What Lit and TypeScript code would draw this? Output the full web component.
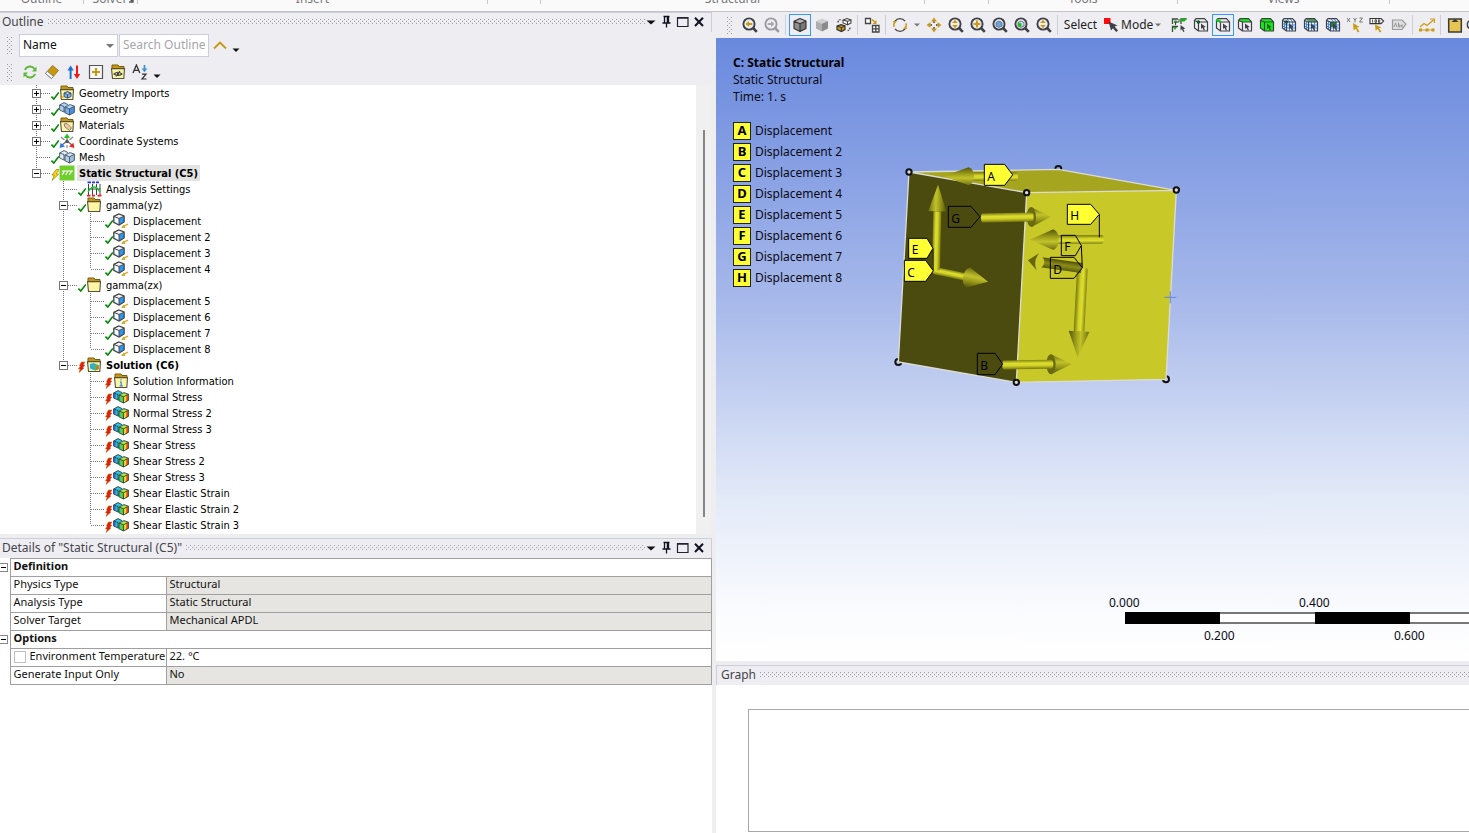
import { LitElement, html, svg, css, nothing } from "lit";
import { customElement, property } from "lit/decorators.js";
import { classMap } from "lit/directives/class-map.js";

const INK = "#3f3f46";
const GOLD = "#cc9a10";

/* ---------- icon fragments, all on a 16 x 16 grid ---------- */

const lens = (inner: unknown, color = INK) => svg`
  <circle cx="7" cy="7" r="5.6" fill="none" stroke=${color} stroke-width="1.9"/>
  <path d="M11 11 L14.8 14.8" stroke=${color} stroke-width="2.6"/>${inner}`;

const pointer = (x: number, y: number, color = INK) => svg`
  <path transform="translate(${x} ${y})" fill=${color}
    d="M0 0 L0 5.4 L1.4 4.3 L2.8 7 L4 6.4 L2.8 3.9 L4.8 3.6 Z"/>`;

const wireCube = (fill: unknown, over: unknown = nothing) => svg`
  ${fill}
  <path d="M1.5 3.5 L3 1.7 H11.5 L14.5 4.8 V14 H5.5 L1.5 11 Z M1.5 3.5 L5.5 5 H14.5 M5.5 5 V14"
    fill="none" stroke=${INK} stroke-width="1.2" stroke-linejoin="round"/>${over}`;

const meshCube = (fill: unknown) => svg`
  <path d="M1.5 3.5 L3 1.7 H11.5 L14.5 4.8 V14 H5.5 L1.5 11 Z" fill="#e8f1ff"/>
  <path d="M8.5 5 V14 M11.5 5 V14 M5.5 8 H14.5 M5.5 11 H14.5 M3.5 4.4 V12.5 M1.5 6.5 L5.5 8 M1.5 9 L5.5 11 M6 1.7 L8.5 5 M9 1.7 L11.5 5"
    fill="none" stroke="#3f8fe8" stroke-width="1"/>
  ${wireCube(fill)}${pointer(8, 6.5)}`;

const solidCube = (top: string, left: string, right: string, stroke: string) => svg`
  <path d="M8 1.5 L14 4 L8 6.8 L2 4.2 Z" fill=${top}/>
  <path d="M2 4.2 L8 6.8 V14.6 L2 11.6 Z" fill=${left}/>
  <path d="M14 4 L8 6.8 V14.6 L14 11.4 Z" fill=${right}/>
  <path d="M8 1.5 L14 4 V11.4 L8 14.6 L2 11.6 V4.2 Z M2 4.2 L8 6.8 L14 4 M8 6.8 V14.6"
    fill="none" stroke=${stroke} stroke-width="1.1" stroke-linejoin="round"/>`;

const folder = (inner: unknown = nothing) => svg`
  <path d="M2 1 H8 L9 2.5 H14 V6 H2 Z" fill="#c9970e" stroke="#7a5c10" stroke-width="1"/>
  <path d="M1.5 4.6 H14.5 L13.8 14.5 H2.5 Z" fill="#fdf5a6" stroke="#55513f" stroke-width="1.1"/>${inner}`;

const twinCubes = (a: string, b: string, c: string, d: string) => svg`
  <path d="M.6 4 L5 1.6 L9 3.4 V9 L5 11 L.6 9 Z" fill=${a}/>
  <path d="M6 6 L11 3.6 L15.4 5.2 V11.4 L10.5 14 L6 11.8 Z" fill=${b}/>
  <path d="M6 6 L10.5 7.8 V14 L6 11.8 Z" fill=${c}/>
  <path d="M15.4 5.2 L10.5 7.8 V14 L15.4 11.4 Z" fill=${d}/>
  <path d="M9 3.6 L5 1.6 L.6 4 L5 5.5 M.6 4 V9 L5 11 H6 M5 5.5 V11 M6 6 L11 3.6 L15.4 5.2 V11.4 L10.5 14 L6 11.8 Z M6 6 L10.5 7.8 L15.4 5.2 M10.5 7.8 V14"
    fill="none" stroke="#3d5266" stroke-width=".9" stroke-linejoin="round"/>`;

const ICONS: Record<string, unknown> = {
  /* window captions */
  menu: svg`<path d="M3.5 6.5 H12.5 L8 10.5 Z" fill="#111"/>`,
  pin: svg`<path d="M4.5 2.5 H10.5 M5.5 2.5 V8.5 M9.5 2.5 V8.5 M8.4 2.5 V8.5 M3.5 9 H11.5 M7.5 9 V13.5" fill="none" stroke="#112" stroke-width="1.3"/>`,
  maximize: svg`<path d="M2.5 3.5 H13 V12.5 H2.5 Z M2.5 4.2 H13" fill="none" stroke="#223" stroke-width="1.2"/>`,
  close: svg`<path d="M4 3.8 L12 12 M12 3.8 L4 12" stroke="#111122" stroke-width="2"/>`,

  /* outline toolbar */
  up: svg`<path d="M2 10.5 L8 4.5 L14 10.5" fill="none" stroke="#c9970e" stroke-width="1.8"/>`,
  overflow: svg`<path d="M4.5 10.5 H11.5 L8 14 Z" fill="#111"/>`,
  refresh: svg`
    <path d="M3 6 A5.4 5.4 0 0 1 12.6 5 M13 10 A5.4 5.4 0 0 1 3.4 11" fill="none" stroke="#5fb83a" stroke-width="1.9"/>
    <path d="M14.5 2.5 V7.5 H10 Z M1.5 13.5 V8.5 H6 Z" fill="#5fb83a"/>`,
  eraser: svg`
    <path d="M1.5 9.5 L8.5 1.5 L14.5 6.5 L7.5 14.5 Z" fill="#c9970e" stroke="#8a6a18" stroke-width=".8"/>
    <path d="M1.5 9.5 L3.4 7.3 L9.4 12.3 L7.5 14.5 Z" fill="#fff" stroke="#777" stroke-width=".9"/>`,
  sort: svg`
    <path d="M4.6 15 V4" stroke="#1f6fd0" stroke-width="2"/><path d="M1.4 6.5 L4.6 1.5 L7.8 6.5 Z" fill="#1f6fd0"/>
    <path d="M11 1.5 V12" stroke="#f01818" stroke-width="2"/><path d="M7.8 10 L11 15 L14.2 10 Z" fill="#f01818"/>`,
  expand: svg`<path d="M1.5 1.5 H14.5 V14.5 H1.5 Z" fill="#f7f7fa" stroke="#555" stroke-width="1.2"/><path d="M8 4 V12 M4 8 H12" stroke="#c9970e" stroke-width="2"/>`,
  hide: svg`${folder(svg`<path d="M4 10 Q8 6.5 12 10 Q8 13 4 10 Z M6 12.5 L10 7" fill="none" stroke="#444" stroke-width="1.1"/><circle cx="8" cy="10" r="1.2" fill="#444"/>`)}`,
  az: svg`
    <path d="M1 9 L4.4 1 L7.8 9 M2.2 6.4 H6.6" fill="none" stroke="#333" stroke-width="1.3"/>
    <path d="M12.5 1 V6" stroke="#3d93d0" stroke-width="1.8"/><path d="M9.6 4.6 H15.4 L12.5 8.2 Z" fill="#3d93d0"/>
    <path d="M10 10.2 H14 L10 15 H14.5" fill="none" stroke="#333" stroke-width="1.2"/>`,

  /* tree status */
  check: svg`<path d="M1.4 11.6 L3.8 14 L8.8 7.4" fill="none" stroke="#0a8a0a" stroke-width="1.7"/>`,
  boltYellow: svg`<path d="M6.4 4.5 L2 10 L4.4 10.2 L2 15.4 L8.6 9.2 L6 8.8 L9.5 4.6 Z" fill="#ffd814" stroke="#a88200" stroke-width=".8"/>`,
  boltRed: svg`<path d="M4.4 5 H8 L6.2 8 L8 8 L5.8 10.8 L7 11 L2 15.6 L3.2 12 L1.4 11.8 L3.4 9 L2.4 8.8 Z" fill="#f31111" stroke="#a08a18" stroke-width=".6"/>`,

  /* tree objects */
  folder: folder(),
  imports: folder(svg`<path d="M5 8 L8.5 6.5 L12 8 V11.5 L8.5 13.2 L5 11.5 Z M5 8 L8.5 9.4 L12 8 M8.5 9.4 V13" fill="#7cb0ea" stroke="#2f4f70" stroke-width=".9"/><path d="M1 12 H5 M2 10.5 V14" stroke="#c9970e" stroke-width="1.2"/>`),
  materials: folder(svg`<path d="M5 7 L8 6.5 L12.5 11 L10.5 13.5 L6 10 Z" fill="#f2c9a0" stroke="#777" stroke-width=".9"/>`),
  geometry: twinCubes("#b7d3f2", "#bcd9f7", "#7db0ea", "#4b8fe0"),
  mesh: twinCubes("#e3ecf4", "#d7e6f3", "#b8cfe4", "#9fbedc"),
  axes: svg`
    <path d="M8 8 V3 M8 8 L3 12 M8 8 L13 12" stroke="#666" stroke-width="1.2"/>
    <path d="M5 5 L8 .6 L11 5 Z" fill="#17c917"/><path d="M.6 15 L1.6 9.8 L6 13.6 Z" fill="#2c78ef"/>
    <path d="M15.4 15 L14.4 9.8 L10 13.6 Z" fill="#f02020"/><path d="M2 4 L5.5 7 M14 4 L10.5 7 M8 12 V15" stroke="#888" stroke-width="1.2"/>
    <circle cx="8" cy="8.5" r="1.8" fill="#555"/>`,
  environment: svg`<path d="M.5 .5 H15.5 V15.5 H.5 Z" fill="#6fd02c"/><path d="M3 6 H14 M3 10 L5.5 6.2 M6.6 10 L9 6.2 M10.2 10 L12.6 6.2" stroke="#fff" stroke-width="1.2"/>`,
  settings: svg`
    <path d="M2.5 3 V14 M6.5 3 V14 M10.5 3 V14 M14 3 V14 M2 8 H14.5" stroke="#444" stroke-width="1"/>
    <path d="M1.5 1.4 H5 M6 1.4 H9 M10 1.4 H13" stroke="#2030f0" stroke-width="1.6"/>
    <path d="M1 14.6 H4.5 M6 14.6 H9 M11.5 14.6 H15.5" stroke="#f02020" stroke-width="1.6"/>
    <path d="M2 11 Q8 1 14 11" fill="none" stroke="#18c838" stroke-width="1.3"/>`,
  displacement: svg`
    <path d="M.8 3.4 L5.8 1 L11 3 V9 L6 12 L.8 9.4 Z" fill="#f4f6f8" stroke="#444" stroke-width="1.3"/>
    <path d="M6 5.4 L11 3.2 V9 L6 11.8 Z" fill="#2a96f0" stroke="#444" stroke-width=".9"/>
    <path d="M.8 3.4 L6 5.4" stroke="#444"/>
    <path d="M9.6 13.8 L15 11" stroke="#d9a520" stroke-width="1.4"/><path d="M8 14.8 L11 11.6 L12.4 15 Z" fill="#d9a520"/>`,
  solution: folder(svg`<path d="M4 7 L7.5 6 L12.5 8 V12 L9 13.5 L4 11.5 Z" fill="#33aadd"/><path d="M7.5 8 H12.5 V12 L9 13.5 Z" fill="#4cc04c"/><path d="M10.5 9 H12.5 V12 L10.5 13 Z" fill="#f06020"/>`),
  info: folder(svg`<path d="M8 6.3 V7.6 M7 9 H8.2 V12.6 M6.6 12.8 H9.8" fill="none" stroke="#2c8ae0" stroke-width="1.2"/>`),
  result: svg`
    <path d="M.6 4 L5 1.6 L9.4 3.4 V9 L5 11 L.6 9 Z" fill="#2fc4e4"/><path d="M.6 4 L2.8 4.8 V10 L.6 9 Z" fill="#2a78e0"/>
    <path d="M6 6 L11 3.6 L15.4 5.2 V11.4 L10.5 14 L6 11.8 Z" fill="#a8e830"/><path d="M6 6 L10.5 7.8 V14 L6 11.8 Z" fill="#52d04c"/>
    <path d="M15.4 5.2 L10.5 7.8 V14 L15.4 11.4 Z" fill="#ecdc20"/><path d="M15.4 5.2 L13.2 6.4 V12.6 L15.4 11.4 Z" fill="#f0501c"/>
    <path d="M9 3.6 L5 1.6 L.6 4 L5 5.5 M.6 4 V9 L5 11 H6 M5 5.5 V11 M6 6 L11 3.6 L15.4 5.2 V11.4 L10.5 14 L6 11.8 Z M6 6 L10.5 7.8 L15.4 5.2 M10.5 7.8 V14"
      fill="none" stroke="#30424c" stroke-width=".9" stroke-linejoin="round"/>`,

  /* graphics toolbar */
  zoomPrev: lens(svg`<path d="M3.5 7 L7 4 V6 H10.3 V8 H7 V10 Z" fill=${GOLD}/>`),
  zoomNext: lens(svg`<path d="M10.5 7 L7 4 V6 H3.7 V8 H7 V10 Z" fill="#aaa"/>`, "#9a9aa0"),
  shaded: solidCube("#b4b4b4", "#8e8e8e", "#777", "#333"),
  shadedOnly: solidCube("#cfcfcf", "#adadad", "#8a8a8a", "none"),
  wireToggle: svg`
    <path d="M7 3 L11 1.5 L15 3 V6 L11.5 7.8 L7 6 Z M7 3 L11.5 4.4 L15 3 M11.5 4.4 V7.8" fill="#fff" stroke="#444" stroke-width="1.1"/>
    <path d="M1 9 L5 7.6 L9 9 V12.6 L5.4 14.6 L1 12.6 Z" fill=${GOLD} stroke="#333" stroke-width="1.2"/><path d="M1 9 L5.4 10.6 L9 9 M5.4 10.6 V14.6" stroke="#333" fill="none"/>
    <path d="M2 5.6 Q2 3 4.6 2.6 M14 10.5 Q14 13 11.6 13.6" fill="none" stroke="#444" stroke-width="1.3" stroke-dasharray="2 1"/>`,
  viewports: svg`
    <path d="M1.5 1.5 H6.5 V6.5 H1.5 Z M8.5 8.5 H15 V15 H8.5 Z M11.8 8.5 V15 M8.5 11.8 H15" fill="#fff" stroke="#444" stroke-width="1.3"/>
    <path d="M8 2.5 L11 5.2" stroke=${GOLD} stroke-width="1.6"/><path d="M12.5 3 V7 H8.5 Z" fill=${GOLD}/>`,
  rotate: svg`
    <path d="M3 4.2 A6.2 6.2 0 0 1 13 4.2 M13 11.8 A6.2 6.2 0 0 1 3 11.8" fill="none" stroke="#444" stroke-width="1.4"/>
    <path d="M1.9 6.2 V10 M14.1 6.2 V10" stroke=${GOLD} stroke-width="1.5"/>
    <path d="M1 4 H5 L2 7.5 Z M15 12 H11 L14 8.8 Z" fill=${GOLD}/>`,
  caret: svg`<path d="M4 6 H12 L8 10 Z" fill="#777"/>`,
  pan: svg`<path d="M8 .6 L11 4.4 H5 Z M8 15.4 L11 11.6 H5 Z M.6 8 L4.4 5 V11 Z M15.4 8 L11.6 5 V11 Z" fill=${GOLD}/><path d="M7 5.2 H9 M7 10.8 H9 M5.2 7 V9 M10.8 7 V9" stroke="#444" stroke-width="1.2"/>`,
  zoom: lens(svg`<path d="M7 2.8 L9.8 6 H4.2 Z M7 11.2 L9.8 8 H4.2 Z" fill=${GOLD}/>`),
  zoomBox: lens(svg`<path d="M7 3.6 V10.4 M3.6 7 H10.4" stroke=${GOLD} stroke-width="2"/>`),
  zoomFit: lens(svg`<path d="M4 5.5 L7 4 L10 5.5 V9 L7 10.4 L4 9 Z" fill="#6ea6dc" stroke="#4a6a8a" stroke-width=".8"/>`),
  zoomSel: lens(svg`<path d="M4 5.5 L7 4 L10 5.5 V9 L7 10.4 L4 9 Z" fill="#cde" stroke="#557" stroke-width=".8"/><path d="M4 5.5 L7.5 6.6 V10 L4 9 Z" fill="#12c812"/>`),
  mode: svg`<path d="M0 1 H6.5 V7 H0 Z" fill="#fb0a0a"/><path d="M4.5 4.5 L13.5 8.5 L10.6 9.6 L14 13.6 L12.2 15 L9 11.2 L7 13.6 Z" fill="#3f3f46"/>`,
  smart: svg`
    <path d="M1.5 7 V2 H7 M1.5 15 V9.5 H7 M10 7 V2 H15.5" fill="none" stroke="#444" stroke-width="1.3"/>
    <path d="M9.5 1.5 H16 L13.5 4.5 H9.5 Z M2 10 L6 10 L4 13 Z" fill="#12b312"/><circle cx="4.5" cy="4.8" r="1.6" fill="#12b312"/>
    <path d="M4.5 4.8 V8 M8 2 V5 H5" stroke="#444" fill="none"/>${pointer(9.5, 8)}`,
  vertex: wireCube(nothing, svg`<circle cx="5.4" cy="5" r="1.8" fill="#0d5a1c"/>${pointer(8, 6.5)}`),
  edge: wireCube(nothing, svg`<path d="M1.2 2.6 L5.8 4.8" stroke="#12c812" stroke-width="2.6"/>${pointer(8, 6.5)}`),
  face: wireCube(svg`<path d="M1.5 3.5 L3 1.7 H11.5 L14.5 5 H5.5 Z" fill="#12f012"/>`, pointer(8, 6.5)),
  body: wireCube(svg`<path d="M1.5 3.5 L3 1.7 H11.5 L14.5 4.8 V14 H5.5 L1.5 11 Z" fill="#12f012"/>`, pointer(8, 6.5, "#0b6b0b")),
  node: meshCube(svg`<circle cx="5.4" cy="5" r="1.8" fill="#0d5a1c"/>`),
  elementFace: meshCube(svg`<path d="M3 1.7 H11.5 L14.5 5 H5.5 Z" fill="#4f9f62"/>`),
  element: meshCube(svg`<path d="M5.5 5 H11 V10 H5.5 Z" fill="#2c7a3c"/>`),
  coord: svg`
    <path d="M0 1 L3 5 M3 1 L0 5 M6.5 1 L8 3 L9.5 1 M8 3 V5.4 M12.5 1 H15.5 L12.5 5 H15.8" fill="none" stroke="#777" stroke-width="1"/>
    <path d="M6 6 L12.5 10 L9.8 10.6 L12.4 14.4 L10.8 15.4 L8.6 11.6 L6.6 13.4 Z" fill=${GOLD}/>`,
  probe: svg`
    <path d="M1 1.5 H12 L14.6 4 L12 6.6 H1 Z" fill="#fff" stroke="#333" stroke-width="1.1"/>
    <path d="M3.6 2.6 V5.6 M6 2.8 H7.4 V5.4 H6 Z M9.4 2.8 H10.8 V5.4 H9.4 Z" fill="none" stroke="#333" stroke-width=".9"/>
    <path d="M6 7.6 L12.5 10.6 L9.8 11 L12.4 14.6 L10.8 15.6 L8.6 12 L6.6 13.8 Z" fill=${GOLD}/>`,
  annotate: svg`
    <path d="M1.5 3 H11 L15 7 L11 12.5 H1.5 Z" fill="#dedee0" stroke="#999" stroke-width="1.2"/>
    <path d="M3 10 L4.5 6 L6 10 M7.5 5.5 V10 H9 V8 H7.5 M12.2 8 H10.6 V10 H12.2" fill="none" stroke="#999" stroke-width="1"/>`,
  chart: svg`<path d="M1 10 L5 6.5 L8 8.5 L14.5 3" fill="none" stroke=${GOLD} stroke-width="1.3"/><path d="M1.5 13 H15" stroke=${GOLD} stroke-width="1"/><path d="M0 11.5 H3 V14.5 H0 Z M6.5 11.5 H9.5 V14.5 H6.5 Z M12.5 11.5 H15.5 V14.5 H12.5 Z" fill=${GOLD}/><path d="M11 2 H15.5 V6" fill="none" stroke=${GOLD} stroke-width="1.2"/>`,
  clipboard: svg`<path d="M1.7 2 H14.3 V15 H1.7 Z" fill="#e8c452" stroke="#3b3b3b" stroke-width="1.5"/><path d="M4.5 5 H11.5 L8 1.8 Z" fill="#3b3b3b"/>`,
};

const icon = (name: string, size = 16, width = size) => html`
  <svg class="icon" width=${width} height=${size} viewBox="0 0 ${(16 * width) / size} 16" aria-hidden="true">${ICONS[name]}</svg>`;

const shared = css`
  * { box-sizing: border-box; }
  .icon { display: block; flex: none; }
  button { font: inherit; color: inherit; background: none; border: 0; padding: 0; margin: 0; }
  .dots {
    background-image:
      conic-gradient(at 1px 1px, transparent 270deg, #9c9ca0 0),
      conic-gradient(at 1px 1px, transparent 270deg, #9c9ca0 0);
    background-size: 4px 4px;
    background-position: 0 0, 2px 2px;
  }
  .grip { width: 5px; height: 17px; flex: none; }
`;

/* ---------- ribbon footer ---------- */

@customElement("ribbon-footer")
export class RibbonFooter extends LitElement {
  static styles = [shared, css`
    :host { display: block; }
    .ribbon {
      display: flex; align-items: flex-end; height: 12px; padding-bottom: 7px; overflow: hidden;
      background: #fafafa; border-bottom: 1px solid #c4c4c8; color: #77777c;
      font-size: 12px; line-height: 16px;
    }
    .group {
      flex: none; display: flex; align-items: flex-end; justify-content: center; gap: 2px;
      height: 16px; border-right: 1px solid #c8c8cc;
    }
    .group:last-child { border-right-color: #c8c8cc; }
    .name { margin-bottom: -3px; }
    .launch { flex: none; margin: 0 -6px 1px 0; }
  `];

  private groups: [string, number, boolean?][] = [
    ["Outline", 84], ["Solver", 54, true], ["Insert", 350], ["", 53],
    ["Structural", 384], ["", 64], ["Tools", 189], ["Views", 212],
  ];

  render() {
    return html`<div class="ribbon">
      ${this.groups.map(([name, w, launch]) => html`<div class="group" style="width:${w}px">
        <span class="name">${name}</span>
        ${launch ? html`<svg class="launch" width="5" height="5"><path d="M4 0 V4 H0 M0 0 L4 4" fill="none" stroke="#555" stroke-width="1.4"/></svg>` : nothing}
      </div>`)}
    </div>`;
  }
}

/* ---------- caption bar of a docked pane ---------- */

@customElement("pane-caption")
export class PaneCaption extends LitElement {
  @property() label = "";
  @property({ type: Boolean }) buttons = false;

  static styles = [shared, css`
    :host { display: block; }
    .bar {
      display: flex; align-items: center; gap: 4px; height: 20px; padding: 0 4px 2px 2px;
      background: #eeeef2; border: solid #cccedb; border-width: 1px 1px 0 0;
    }
    .open { border-width: 1px 0 0 1px; padding: 0 0 2px 4px; }
    .title { margin: 0; font-weight: 400; font-size: 12px; line-height: 16px; color: #44444a; white-space: nowrap; }
    .dots { flex: 1; height: 5px; }
    .actions { display: flex; margin-left: -6px; }
    .actions button { width: 16px; height: 16px; }
  `];

  render() {
    return html`<div class=${classMap({ bar: true, open: !this.buttons })}>
      <h2 class="title">${this.label}</h2>
      <span class="dots"></span>
      ${this.buttons ? html`<div class="actions">
        ${[["menu", "Options"], ["pin", "Auto hide"], ["maximize", "Maximize"], ["close", "Close"]].map(
          ([i, l]) => html`<button aria-label=${l}>${icon(i)}</button>`)}
      </div>` : nothing}
    </div>`;
  }
}

/* ---------- outline ---------- */

interface TreeRow {
  level: number;
  label: string;
  icon: string;
  status: string;
  box?: "+" | "-";
  end?: boolean;
  guides?: boolean[];
  bold?: boolean;
  selected?: boolean;
}

const leafs = (labels: string[], guides: boolean[], iconName: string, status: string): TreeRow[] =>
  labels.map((label, i) => ({ level: 2, label, icon: iconName, status, guides, end: i === labels.length - 1 }));

const ROWS: TreeRow[] = [
  { level: 0, label: "Geometry Imports", icon: "imports", status: "check", box: "+" },
  { level: 0, label: "Geometry", icon: "geometry", status: "check", box: "+" },
  { level: 0, label: "Materials", icon: "materials", status: "check", box: "+" },
  { level: 0, label: "Coordinate Systems", icon: "axes", status: "check", box: "+" },
  { level: 0, label: "Mesh", icon: "mesh", status: "check" },
  { level: 0, label: "Static Structural (C5)", icon: "environment", status: "boltYellow", box: "-", end: true, bold: true, selected: true },
  { level: 1, label: "Analysis Settings", icon: "settings", status: "check", guides: [false] },
  { level: 1, label: "gamma(yz)", icon: "folder", status: "check", box: "-", guides: [false] },
  ...leafs(["Displacement", "Displacement 2", "Displacement 3", "Displacement 4"], [false, true], "displacement", "check"),
  { level: 1, label: "gamma(zx)", icon: "folder", status: "check", box: "-", guides: [false] },
  ...leafs(["Displacement 5", "Displacement 6", "Displacement 7", "Displacement 8"], [false, true], "displacement", "check"),
  { level: 1, label: "Solution (C6)", icon: "solution", status: "boltRed", box: "-", end: true, bold: true, guides: [false] },
  { level: 2, label: "Solution Information", icon: "info", status: "boltRed", guides: [false, false] },
  ...leafs(
    ["Normal Stress", "Normal Stress 2", "Normal Stress 3", "Shear Stress", "Shear Stress 2", "Shear Stress 3",
      "Shear Elastic Strain", "Shear Elastic Strain 2", "Shear Elastic Strain 3"],
    [false, false], "result", "boltRed"),
];

@customElement("outline-pane")
export class OutlinePane extends LitElement {
  static styles = [shared, css`
    :host { display: block; background: #eeeef2; }
    .search, .tools { display: flex; align-items: center; padding-left: 7px; }
    .search { padding-top: 2px; height: 25px; }
    .tools { height: 28px; padding-top: 2px; }
    .grip { margin-right: 7px; }
    .pick { position: relative; width: 99px; margin-right: 1px; }
    .field {
      display: block; width: 100%; height: 23px; margin: 0; padding: 0 3px 2px; appearance: none;
      border: 1px solid #cccedb; border-radius: 0; background: #fff; color: #111;
      font: 12px/16px "Noto Sans", sans-serif; outline: 0;
    }
    .pick .icon { position: absolute; right: 0; top: 4px; pointer-events: none; }
    .query { width: 90px; }
    .query::placeholder { color: #a5a5aa; opacity: 1; }
    .tools button { width: 22px; display: flex; justify-content: center; }
    .tools .more, .search .more { width: 12px; display: flex; justify-content: center; }
    .search .up { margin-left: 3px; width: 16px; }
    .search .more { margin-left: 2px; }
    .body { display: flex; }
    .tree { flex: 1; margin: 0; padding: 0 0 0 23px; height: 449px; list-style: none; background: #fff; overflow: hidden; }
    .row { display: flex; align-items: center; height: 16px; }
    .guide { display: block; flex: none; }
    .label {
      margin-left: 2px; padding: 2px 2px 0; white-space: nowrap; color: #000;
      font: 11px/14px "DejaVu Sans Condensed", "DejaVu Sans", sans-serif;
    }
    .bold { font-weight: 700; }
    .selected { background: #e3e3e3; }
    .track { width: 15px; margin-right: 1px; background: #f0f0f0; display: flex; justify-content: center; padding: 45px 0 17px; }
    .thumb { width: 2px; background: #868686; }
  `];

  private guide(r: TreeRow) {
    return html`
      ${(r.guides ?? []).map((on) => html`<svg class="guide" width="27" height="16" shape-rendering="crispEdges">
        ${on ? svg`<path d="M13.5 0 V16" stroke="#777" stroke-dasharray="1 1"/>` : nothing}</svg>`)}
      <svg class="guide" width="27" height="16" shape-rendering="crispEdges">
        <path d="M13.5 0 V${r.end ? 8 : 16} M14 8.5 H27" stroke="#777" stroke-dasharray="1 1"/>
        ${r.box ? svg`<path d="M9.5 4.5 H17.5 V12.5 H9.5 Z" fill="#fff" stroke="#777"/>
          <path d="M11 8.5 H16 ${r.box === "+" ? "M13.5 6 V11" : ""}" stroke="#000"/>` : nothing}
      </svg>`;
  }

  render() {
    return html`
      <pane-caption label="Outline" buttons></pane-caption>
      <div class="search">
        <span class="grip dots"></span>
        <div class="pick">
          <select class="field" aria-label="Search by"><option>Name</option></select>
          ${icon("caret")}
        </div>
        <input class="field query" type="text" aria-label="Search Outline" placeholder="Search Outline">
        <button class="up" aria-label="Collapse search">${icon("up")}</button>
        <button class="more" aria-label="More search options">${icon("overflow")}</button>
      </div>
      <div class="tools">
        <span class="grip dots"></span>
        ${[["refresh", "Refresh"], ["eraser", "Clear"], ["sort", "Sort"], ["expand", "Expand all"], ["hide", "Hide folders"], ["az", "Sort A to Z"]].map(
          ([i, l]) => html`<button aria-label=${l}>${icon(i)}</button>`)}
        <button class="more" aria-label="More tools">${icon("overflow")}</button>
      </div>
      <div class="body">
        <ul class="tree">
          ${ROWS.map((r) => html`<li class="row">${this.guide(r)}${icon(r.status, 16, 9)}${icon(r.icon, 16)}
            <span class=${classMap({ label: true, bold: !!r.bold, selected: !!r.selected })}>${r.label}</span></li>`)}
        </ul>
        <div class="track"><div class="thumb"></div></div>
      </div>`;
  }
}

/* ---------- details ---------- */

@customElement("details-pane")
export class DetailsPane extends LitElement {
  static styles = [shared, css`
    :host { display: block; background: #fff; }
    .grid {
      width: 100%; border-collapse: collapse; table-layout: fixed; color: #111;
      font-size: 11px; line-height: 14px;
    }
    .gutter { width: 10px; }
    .names { width: 156px; }
    th, td { height: 18px; padding: 0 3px; text-align: left; font-weight: 400; white-space: nowrap; vertical-align: top; border: 1px solid #a0a0a0; }
    .toggle { padding: 4px 0 0; border-width: 0 1px 0 0; }
    .toggle button { display: block; height: 9px; width: 8px; }
    .group { font-weight: 700; }
    .locked { background: #e6e5e1; }
    .check { display: flex; align-items: center; gap: 4px; height: 14px; }
    .check input { appearance: none; width: 12px; height: 12px; margin: 2px 0 0; border: 1px solid #c0c0c0; background: #fff; flex: none; }
  `];

  private groups: { name: string; rows: [string, string, boolean, boolean?][] }[] = [
    { name: "Definition", rows: [["Physics Type", "Structural", true], ["Analysis Type", "Static Structural", true], ["Solver Target", "Mechanical APDL", true]] },
    { name: "Options", rows: [["Environment Temperature", "22. °C", false, true], ["Generate Input Only", "No", true]] },
  ];

  render() {
    return html`
      <pane-caption label='Details of "Static Structural (C5)"' buttons></pane-caption>
      <table class="grid">
        <colgroup><col class="gutter"><col class="names"><col></colgroup>
        ${this.groups.map((g) => html`<tbody>
          <tr>
            <td class="toggle"><button aria-label="Collapse ${g.name}">
              <svg class="icon" width="8" height="9" shape-rendering="crispEdges"><path d="M-1 .5 H7.5 V8.5 H-1" fill="#fff" stroke="#888"/><path d="M1 4.5 H6" stroke="#000"/></svg>
            </button></td>
            <th class="group" colspan="2">${g.name}</th>
          </tr>
          ${g.rows.map(([name, value, locked, box]) => html`<tr>
            <td class="toggle"></td>
            <th>${box ? html`<label class="check"><input type="checkbox">${name}</label>` : name}</th>
            <td class=${locked ? "locked" : ""}>${value}</td>
          </tr>`)}
        </tbody>`)}
      </table>`;
  }
}

/* ---------- graphics toolbar ---------- */

@customElement("graphics-toolbar")
export class GraphicsToolbar extends LitElement {
  static styles = [shared, css`
    :host { display: block; }
    .bar { display: flex; align-items: center; height: 26px; padding-left: 11px; background: #eeeef2; overflow: hidden; color: #1e1e1e; font-size: 12px; line-height: 16px; }
    .grip { margin-right: 7px; }
    .tool { width: 22px; height: 22px; flex: none; display: flex; align-items: center; justify-content: center; }
    .on { border: 1px solid #3399ff; }
    .sep { width: 1px; height: 20px; flex: none; margin: 0 3px 0 2px; background: #cccedb; }
    .drop { width: 12px; flex: none; display: flex; justify-content: center; }
    .select { width: 39px; flex: none; }
    .mode { width: 68px; flex: none; display: flex; align-items: center; padding-left: 4px; gap: 1px; }
    .mode .drop { width: 10px; margin-left: -1px; }
  `];

  private tool(i: string) {
    return i === "|" ? html`<span class="sep"></span>`
      : html`<button class=${classMap({ tool: true, on: i === "shaded" || i === "edge" })} aria-label=${i}>${icon(i)}</button>`;
  }

  render() {
    return html`<div class="bar">
      <span class="grip dots"></span>
      ${["zoomPrev", "zoomNext", "|", "shaded", "shadedOnly", "wireToggle", "|", "viewports", "|", "rotate"].map((i) => this.tool(i))}
      <button class="drop" aria-label="Rotate options">${icon("caret", 12)}</button>
      ${["pan", "zoom", "zoomBox", "zoomFit", "zoomSel", "zoom", "|"].map((i) => this.tool(i))}
      <button class="select">Select</button>
      <button class="mode">${icon("mode")}<span>Mode</span><span class="drop">${icon("caret", 12)}</span></button>
      ${["smart", "vertex", "edge", "face", "body", "node", "elementFace", "element", "coord", "probe", "annotate", "|", "chart", "|", "clipboard"].map((i) => this.tool(i))}
      <span>Clipboard</span>
    </div>`;
  }
}

/* ---------- 3D view ---------- */

interface Arrow {
  x: number; y: number; tx: number; ty: number;
  cone: number; half: number; thick: number;
  look?: "front" | "back" | "dark";
}

const ARROWS: Arrow[] = [
  { x: 408, y: 79, tx: 190, ty: 79, cone: 76, half: 27, thick: 26 },
  { x: 308, y: 204, tx: 512, ty: 200, cone: 58, half: 30, thick: 27, look: "back" },
  { x: 665, y: 268, tx: 450, ty: 269, cone: 70, half: 31, thick: 26 },
  { x: 165, y: 362, tx: 324, ty: 395, cone: 60, half: 30, thick: 22 },
  { x: 168, y: 356, tx: 174, ty: 104, cone: 80, half: 27, thick: 24 },
  { x: 607, y: 358, tx: 593, ty: 622, cone: 78, half: 31, thick: 32 },
  { x: 372, y: 645, tx: 575, ty: 642, cone: 62, half: 30, thick: 27, look: "back" },
  { x: 605, y: 354, tx: 444, ty: 331, cone: 34, half: 26, thick: 30, look: "dark" },
];

const drawArrow = (a: Arrow) => {
  const len = Math.hypot(a.tx - a.x, a.ty - a.y);
  const ang = (Math.atan2(a.ty - a.y, a.tx - a.x) * 180) / Math.PI;
  const base = len - a.cone;
  const h = a.half;
  const t = a.thick / 2;
  const bulge = Math.abs(a.ty - a.y) > 100 ? 0 : 16;
  return svg`<g transform="translate(${a.x} ${a.y}) rotate(${ang})">
    ${a.look === "back" ? svg`
      <path d="M${base} ${-h} L${len} 0 L${base} ${h} Z" fill="url(#cone)"/>
      <ellipse cx=${base} cy="0" rx="14" ry=${h} fill="#6a6a10"/>
      <path d="M0 ${-t} H${base} A7 ${t} 0 0 1 ${base} ${t} H0 A5 ${t} 0 0 1 0 ${-t} Z" fill="url(#shaft)"/>`
    : a.look === "dark" ? svg`
      <path d="M0 ${-t} H${base - 6} A9 ${t} 0 0 0 ${base - 6} ${t} H0 Z" fill="url(#dark)"/>
      <path d="M${base + 4} ${-h} L${len} 0 L${base + 4} ${h} Q${base + 20} 0 ${base + 4} ${-h} Z" fill="#66660f"/>`
    : svg`
      <path d="M0 ${-t} H${base} V${t} H0 A6 ${t} 0 0 1 0 ${-t} Z" fill="url(#shaft)"/>
      <path d="M${base} ${-h} L${len} 0 L${base} ${h} Q${base - bulge} ${h * 0.8} ${base - bulge} 0 Q${base - bulge} ${-h * 0.8} ${base} ${-h} Z" fill="url(#cone)"/>`}
  </g>`;
};

/* tag: letter, left, top, shoulder, tip, bottom, solid */
const TAGS: [string, number, number, number, number, number, boolean][] = [
  ["A", 313, 43, 374, 398, 106, true],
  ["G", 205, 169, 273, 300, 232, false],
  ["H", 562, 163, 632, 658, 223, true],
  ["F", 544, 256, 586, 604, 317, false],
  ["D", 511, 322, 582, 607, 385, false],
  ["E", 86, 265, 141, 159, 325, true],
  ["C", 73, 331, 137, 160, 394, true],
  ["B", 292, 610, 345, 368, 674, false],
];

@customElement("model-view")
export class ModelView extends LitElement {
  static styles = [shared, css`
    :host { display: flex; }
    .view {
      position: relative; flex: 1; display: flex; flex-direction: column; justify-content: space-between;
      padding: 16px 0 17px 17px; overflow: hidden; color: #0a0a14; font-size: 12px; line-height: 17px;
      background: linear-gradient(#6989de, #a5b7ea 41%, #e3eaf8 74%, #fafbfe 92%, #fff);
    }
    .title { margin: 0; font-size: 12px; line-height: 17px; color: #000; }
    .line { margin: 0; }
    .legend { list-style: none; margin: 15px 0 0; padding: 0; }
    .legend li { display: flex; align-items: center; gap: 4px; height: 21px; }
    .badge { width: 18px; height: 18px; border: 1px solid #222; background: #ffff33; color: #000; text-align: center; font-weight: 700; font-size: 13px; line-height: 15px; }
    .model { position: absolute; left: 164px; top: 112px; width: 320px; height: 250px; overflow: visible; }
    .letter { font: 36px "Noto Sans", sans-serif; fill: #000; }
    .ruler { margin-left: 392px; width: 382px; flex: none; }
    .marks { display: flex; }
    .marks span { flex: none; width: 190px; }
    .above { margin-left: -16px; }
    .below { margin-left: 79px; }
    .bar { display: flex; height: 12px; margin: 1px 0 3px; border: solid #777; border-width: 2px 0; background: #fff; }
    .bar span { width: 95px; margin: -2px 0; }
    .bar .fill { background: #000; }
  `];

  render() {
    return html`<div class="view">
      <div>
        <h1 class="title">C: Static Structural</h1>
        <p class="line">Static Structural</p>
        <p class="line">Time: 1. s</p>
        <ul class="legend">
          ${["A", "B", "C", "D", "E", "F", "G", "H"].map((l, i) => html`<li><span class="badge">${l}</span>Displacement${i ? ` ${i + 1}` : ""}</li>`)}
        </ul>
      </div>
      <svg class="model" viewBox="0 0 960 750" role="img" aria-label="Cube with displacement loads">
        <defs>
          <linearGradient id="shaft" x2="0" y2="1"><stop offset="0" stop-color="#84841a"/><stop offset=".35" stop-color="#dede2c"/><stop offset=".6" stop-color="#d2d228"/><stop offset="1" stop-color="#77770f"/></linearGradient>
          <linearGradient id="cone" x2="0" y2="1"><stop offset="0" stop-color="#6e6e14"/><stop offset=".4" stop-color="#c2c22a"/><stop offset=".6" stop-color="#a2a21c"/><stop offset="1" stop-color="#54540c"/></linearGradient>
          <linearGradient id="dark" x2="0" y2="1"><stop offset="0" stop-color="#5a5a0e"/><stop offset=".5" stop-color="#8d8d18"/><stop offset="1" stop-color="#4e4e0c"/></linearGradient>
        </defs>
        ${[[535, 57], [55, 636], [858, 688]].map(([x, y]) => svg`<circle cx=${x} cy=${y} r="9" fill="none" stroke="#111" stroke-width="6"/>`)}
        <path d="M87 66 L535 58 L889 121 L440 128 Z" fill="#a5a51f"/>
        <path d="M87 66 L440 128 L409 697 L55 636 Z" fill="#4b4b10"/>
        <path d="M440 128 L889 121 L858 688 L409 697 Z" fill="#c8c828"/>
        <path d="M87 66 L535 58 L889 121 L858 688 L409 697 L55 636 Z M87 66 L440 128 L889 121 M440 128 L409 697"
          fill="none" stroke="#dcdcd4" stroke-width="4" stroke-linejoin="round"/>
        ${[[87, 66], [440, 128], [889, 120], [409, 697]].map(([x, y]) => svg`<circle cx=${x} cy=${y} r="8" fill="#dcdcdc" stroke="#111" stroke-width="6"/>`)}
        ${ARROWS.map(drawArrow)}
        <path d="M658 193 V262 M604 287 L607 354 M159 296 V363" fill="none" stroke="#000" stroke-width="3"/>
        ${TAGS.map(([l, x, y, s, tip, b, solid]) => svg`
          <path d="M${x} ${y} H${s} L${tip} ${(y + b) / 2} L${s} ${b} H${x} Z" fill=${solid ? "#ffff33" : "none"} stroke="#000" stroke-width="3"/>
          <text class="letter" x=${x + 9} y=${b - 13}>${l}</text>`)}
        <path d="M853 442 H889 M871 424 V460" stroke="#5f86e0" stroke-width="3"/>
      </svg>
      <div class="ruler">
        <div class="marks above"><span>0.000</span><span>0.400</span></div>
        <div class="bar"><span class="fill"></span><span></span><span class="fill"></span><span></span></div>
        <div class="marks below"><span>0.200</span><span>0.600</span></div>
      </div>
    </div>`;
  }
}

/* ---------- application shell ---------- */

@customElement("app-root")
export class AppRoot extends LitElement {
  static styles = [shared, css`
    :host {
      display: flex; flex-direction: column; min-height: 100vh; overflow: hidden;
      background: #eeeef0; font-family: "Noto Sans", sans-serif;
    }
    .main { flex: 1; display: flex; gap: 4px; }
    .left { flex: none; width: 712px; display: flex; flex-direction: column; gap: 4px; }
    .fill { flex: 1; }
    .right { flex: 1; min-width: 0; display: flex; flex-direction: column; }
    .graph { margin-top: 4px; background: #fff; }
    .plot { height: 123px; margin: 24px 0 1px 32px; border: solid #a8a8a8; border-width: 1px 0 1px 1px; background: #fff; }
  `];

  render() {
    return html`
      <ribbon-footer></ribbon-footer>
      <div class="main">
        <div class="left">
          <outline-pane></outline-pane>
          <details-pane class="fill"></details-pane>
        </div>
        <div class="right">
          <graphics-toolbar></graphics-toolbar>
          <model-view class="fill"></model-view>
          <section class="graph">
            <pane-caption label="Graph"></pane-caption>
            <div class="plot"></div>
          </section>
        </div>
      </div>`;
  }
}
